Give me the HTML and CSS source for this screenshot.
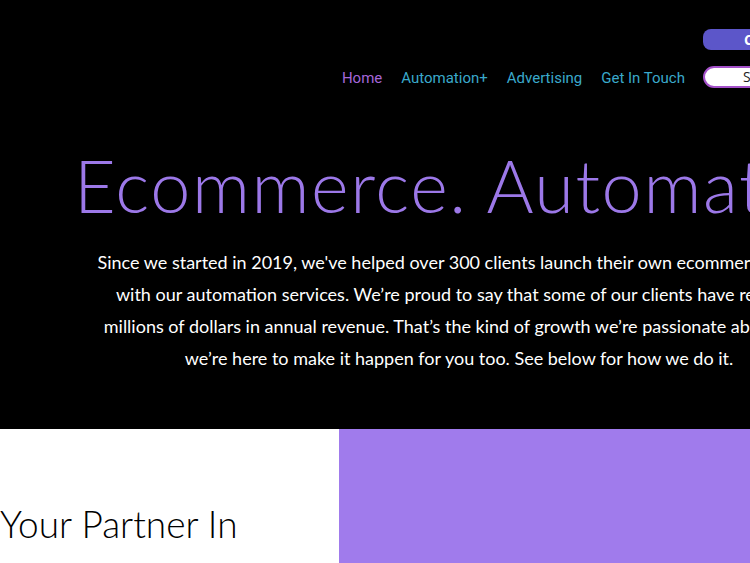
FILE: index.html
```html
<!DOCTYPE html>
<html>
<head>
<meta charset="utf-8">
<link rel="stylesheet" href="styles.css">
</head>
<body>
<div class="page">
  <header class="hero">
    <div class="topbar">
      <nav class="nav">
        <a class="nav-link home">Home</a>
        <a class="nav-link">Automation+</a>
        <a class="nav-link">Advertising</a>
        <a class="nav-link">Get In Touch</a>
      </nav>
      <div class="actions">
        <a class="btn btn-fill">Client Login</a>
        <a class="btn btn-outline">Sign Up</a>
      </div>
    </div>
    <h1 class="title">Ecommerce. Automated.</h1>
    <p class="lead">Since we started in 2019, we've helped over 300 clients launch their own ecommerce stores<br>with our automation services. We’re proud to say that some of our clients have reached<br>millions of dollars in annual revenue. That’s the kind of growth we’re passionate about, and<br>we’re here to make it happen for you too. See below for how we do it.</p>
  </header>
  <section class="split">
    <div class="split-text">
      <h2 class="partner">Your Partner In</h2>
    </div>
    <div class="split-color"></div>
  </section>
</div>
</body>
</html>
```
FILE: styles.css
```css
html, body {
  margin: 0;
  padding: 0;
  overflow: hidden;
  background: #fff;
}
.page {
  width: 918px;
}
.hero {
  background: #000;
  height: 429px;
  box-sizing: border-box;
  padding-top: 29px;
}
.topbar {
  display: flex;
  justify-content: flex-end;
  align-items: flex-end;
  padding-right: 45px;
}
.nav {
  display: flex;
  gap: 19px;
  margin-right: 18px;
  margin-bottom: 0;
}
.nav-link {
  font-family: Roboto, "Liberation Sans", sans-serif;
  font-size: 15px;
  color: #3aa9cb;
  line-height: 20px;
}
.nav-link.home {
  color: #a566d8;
}
.actions {
  display: flex;
  flex-direction: column;
  gap: 16px;
  width: 170px;
}
.btn {
  display: block;
  box-sizing: border-box;
  font-family: "Open Sans", "Liberation Sans", sans-serif;
  font-size: 14px;
  font-weight: 700;
  text-align: left;
  padding-left: 41px;
  border-radius: 8px;
  height: 21px;
  line-height: 21px;
}
.btn-fill {
  background: #5c56c9;
  color: #fff;
}
.btn-outline {
  background: #fff;
  color: #222;
  border: 2px solid #a451c9;
  border-radius: 11px;
  height: 22px;
  line-height: 18px;
  font-weight: 400;
  padding-left: 38px;
}
.title {
  margin: 54px 0 0;
  padding-left: 20px;
  text-align: center;
  font-family: Lato, "Open Sans", sans-serif;
  font-weight: 300;
  font-size: 72px;
  letter-spacing: 1.6px;
  line-height: 86px;
  color: #9c78e8;
  white-space: nowrap;
}
.lead {
  margin: 18px 0 0;
  text-align: center;
  font-family: Lato, "Liberation Sans", sans-serif;
  font-size: 18px;
  line-height: 32px;
  color: #fff;
  white-space: nowrap;
}
.split {
  display: flex;
  height: 134px;
}
.split-text {
  width: 339px;
  display: flex;
  align-items: flex-end;
}
.partner {
  margin: 0 0 17px;
  font-family: Lato, "Open Sans", sans-serif;
  font-weight: 300;
  font-size: 37px;
  line-height: 44px;
  color: #000;
}
.split-color {
  flex: 1;
  background: #a07bec;
}
```
